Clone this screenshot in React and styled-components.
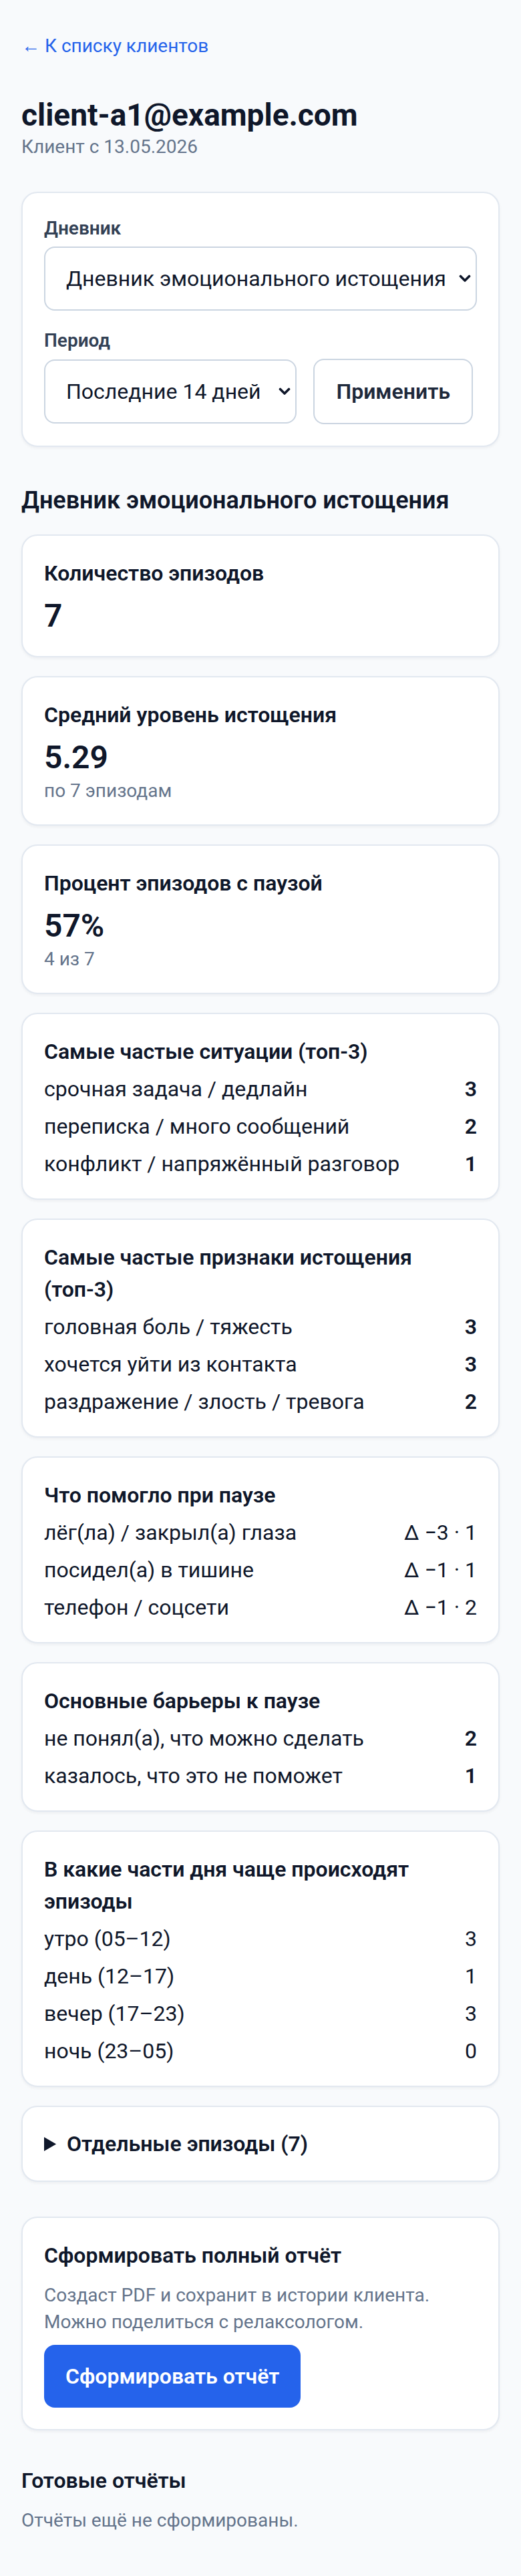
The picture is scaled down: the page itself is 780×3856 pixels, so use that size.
import styled, { createGlobalStyle } from "styled-components";

const GlobalStyle = createGlobalStyle`
    * { box-sizing : border-box; }
    body {
        margin : 0;
        background-color : #f8fafc;
        color : #0f172a;
        font-family : Roboto, "Liberation Sans", sans-serif;
    }
`;

const situations = [
    ["срочная задача / дедлайн", "3"],
    ["переписка / много сообщений", "2"],
    ["конфликт / напряжённый разговор", "1"],
];

const signs = [
    ["головная боль / тяжесть", "3"],
    ["хочется уйти из контакта", "3"],
    ["раздражение / злость / тревога", "2"],
];

const helped = [
    ["лёг(ла) / закрыл(а) глаза", "Δ −3 · 1"],
    ["посидел(а) в тишине", "Δ −1 · 1"],
    ["телефон / соцсети", "Δ −1 · 2"],
];

const barriers = [
    ["не понял(а), что можно сделать", "2"],
    ["казалось, что это не поможет", "1"],
];

const dayParts = [
    ["утро (05–12)", "3"],
    ["день (12–17)", "1"],
    ["вечер (17–23)", "3"],
    ["ночь (23–05)", "0"],
];

const Chevron = () => (
    <ChevronIcon width="18" height="12" viewBox="0 0 18 12">
        <path d="M2.5 2.5 L9 9 L15.5 2.5" fill="none" stroke="#0f172a" strokeWidth="3.6" strokeLinecap="round" strokeLinejoin="round" />
    </ChevronIcon>
);

const ListCard = ({ title, rows, strong = true }) => (
    <Card>
        <CardTitle>{title}</CardTitle>
        <Rows>
            {rows.map(([label, value]) => (
                <Row key={label}>
                    <span>{label}</span>
                    <RowValue $strong={strong}>{value}</RowValue>
                </Row>
            ))}
        </Rows>
    </Card>
);

const App = () => {
    return <Page>
        <GlobalStyle />
        <BackLink href="#">← К списку клиентов</BackLink>
        <Title>client-a1@example.com</Title>
        <Subtitle>Клиент с 13.05.2026</Subtitle>

        <FilterCard>
            <Label>Дневник</Label>
            <SelectWrap>
                <Select defaultValue="exhaustion">
                    <option value="exhaustion">Дневник эмоционального истощения</option>
                </Select>
                <Chevron />
            </SelectWrap>
            <Label $top>Период</Label>
            <FilterRow>
                <SelectWrap $grow>
                    <Select defaultValue="14">
                        <option value="14">Последние 14 дней</option>
                    </Select>
                    <Chevron />
                </SelectWrap>
                <ApplyButton type="button">Применить</ApplyButton>
            </FilterRow>
        </FilterCard>

        <SectionTitle>Дневник эмоционального истощения</SectionTitle>

        <Cards>
            <Card>
                <CardTitle>Количество эпизодов</CardTitle>
                <BigValue>7</BigValue>
            </Card>
            <Card>
                <CardTitle>Средний уровень истощения</CardTitle>
                <BigValue>5.29</BigValue>
                <Muted>по 7 эпизодам</Muted>
            </Card>
            <Card>
                <CardTitle>Процент эпизодов с паузой</CardTitle>
                <BigValue>57%</BigValue>
                <Muted>4 из 7</Muted>
            </Card>
            <ListCard title="Самые частые ситуации (топ-3)" rows={situations} />
            <ListCard title="Самые частые признаки истощения (топ-3)" rows={signs} />
            <ListCard title="Что помогло при паузе" rows={helped} strong={false} />
            <ListCard title="Основные барьеры к паузе" rows={barriers} />
            <ListCard title="В какие части дня чаще происходят эпизоды" rows={dayParts} strong={false} />
            <Card as="details">
                <Summary>Отдельные эпизоды (7)</Summary>
            </Card>
        </Cards>

        <ReportCard>
            <CardTitle>Сформировать полный отчёт</CardTitle>
            <Description>
                Создаст PDF и сохранит в истории клиента.<br />
                Можно поделиться с релаксологом.
            </Description>
            <PrimaryButton type="button">Сформировать отчёт</PrimaryButton>
        </ReportCard>

        <ReadyTitle>Готовые отчёты</ReadyTitle>
        <Empty>Отчёты ещё не сформированы.</Empty>
    </Page>
}

export default App;

const Page = styled.main`
    padding : 48px 32px 64px;
`;

const BackLink = styled.a`
    display : block;
    font-size : 28px;
    line-height : 42px;
    color : #2563eb;
    text-decoration : none;
`;

const Title = styled.h1`
    margin : 54px 0 0;
    font-size : 46px;
    line-height : 56px;
    font-weight : 700;
    color : #0f172a;
`;

const Subtitle = styled.div`
    font-size : 28px;
    line-height : 40px;
    color : #64748b;
`;

const Card = styled.div`
    background-color : white;
    border : 2px solid #e2e8f0;
    border-radius : 24px;
    padding : 32px;
    box-shadow : 0 2px 4px rgba(15, 23, 42, 0.05);
`;

const FilterCard = styled(Card)`
    margin-top : 47px;
`;

const Label = styled.div`
    font-size : 28px;
    line-height : 42px;
    font-weight : 600;
    color : #334155;
    margin : ${p => p.$top ? "24px" : "0"} 0 6px;
`;

const SelectWrap = styled.div`
    position : relative;
    flex : ${p => p.$grow ? 1 : "none"};
`;

const Select = styled.select`
    appearance : none;
    display : block;
    width : 100%;
    height : 96px;
    padding : 0 44px 0 31px;
    border : 2px solid #cbd5e1;
    border-radius : 16px;
    background-color : white;
    font-family : inherit;
    font-size : 32px;
    color : #0f172a;
    outline : none;
`;

const ChevronIcon = styled.svg`
    position : absolute;
    right : 9px;
    top : 50%;
    margin-top : -6px;
    pointer-events : none;
`;

const FilterRow = styled.div`
    display : flex;
    align-items : center;
    gap : 25px;
    padding-right : 6px;
`;

const ApplyButton = styled.button`
    height : 98px;
    padding : 0 32px;
    border : 2px solid #cbd5e1;
    border-radius : 16px;
    background-color : white;
    font-family : inherit;
    font-size : 32px;
    font-weight : 600;
    color : #1e293b;
`;

const SectionTitle = styled.h2`
    margin : 53px 0 24px;
    font-size : 36px;
    line-height : 54px;
    font-weight : 600;
    color : #0f172a;
`;

const Cards = styled.div`
    display : flex;
    flex-direction : column;
    gap : 28px;
`;

const CardTitle = styled.div`
    font-size : 32px;
    line-height : 48px;
    font-weight : 600;
    color : #0f172a;
`;

const BigValue = styled.div`
    margin-top : 12px;
    font-size : 48px;
    line-height : 56px;
    font-weight : 600;
    color : #0f172a;
`;

const Muted = styled.div`
    margin-top : 4px;
    font-size : 28px;
    line-height : 36px;
    color : #64748b;
`;

const Rows = styled.div`
    display : flex;
    flex-direction : column;
    gap : 16px;
    margin-top : 12px;
`;

const Row = styled.div`
    display : flex;
    justify-content : space-between;
    gap : 24px;
    font-size : 32px;
    line-height : 40px;
    color : #0f172a;
`;

const RowValue = styled.span`
    font-weight : ${p => p.$strong ? 600 : 400};
    white-space : nowrap;
`;

const Summary = styled.summary`
    font-size : 32px;
    line-height : 46px;
    font-weight : 600;
    color : #0f172a;
    cursor : pointer;
`;

const ReportCard = styled(Card)`
    margin-top : 52px;
`;

const Description = styled.p`
    margin : 16px 0 14px;
    font-size : 28px;
    line-height : 40px;
    color : #64748b;
`;

const PrimaryButton = styled.button`
    height : 94px;
    padding : 0 32px;
    border : none;
    border-radius : 16px;
    background-color : #2563eb;
    color : white;
    font-family : inherit;
    font-size : 32px;
    font-weight : 600;
`;

const ReadyTitle = styled.h3`
    margin : 51px 0 16px;
    font-size : 32px;
    line-height : 48px;
    font-weight : 600;
    color : #0f172a;
`;

const Empty = styled.p`
    margin : 0;
    font-size : 28px;
    line-height : 40px;
    color : #64748b;
`;
